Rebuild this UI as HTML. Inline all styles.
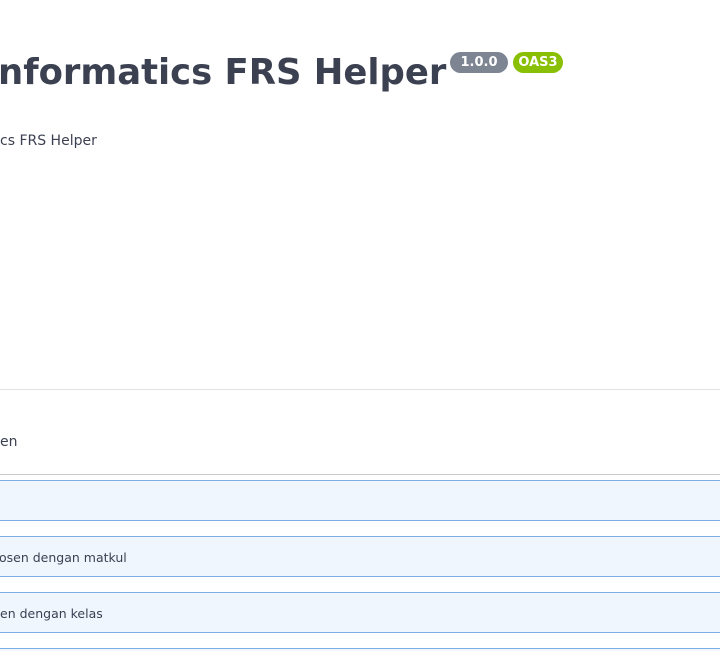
<!DOCTYPE html>
<html><head><meta charset="utf-8"><style>
html,body{margin:0;padding:0;width:720px;height:651px;overflow:hidden;background:#fff;font-family:"DejaVu Sans","Liberation Sans",sans-serif;color:#3b4151;position:relative}
.a{position:absolute;white-space:nowrap}
.t{left:-2px;top:51px;font-size:35.4px;font-weight:bold;line-height:44px}
.b{top:52px;height:21px;border-radius:11px;color:#fff;font-size:13px;font-weight:bold;line-height:22px;text-align:center}
.op{position:absolute;left:-10px;width:740px;height:39px;background:#eff6fe;border-top:1px solid #7eaee2;border-bottom:1px solid #7eaee2;box-sizing:content-box}
.op span{position:absolute;left:10px;top:13px;font-size:12.5px;line-height:16px}
</style></head><body>
<div class="a t">nformatics FRS Helper</div>
<div class="a b" style="left:450px;width:58px;background:#7d8492">1.0.0</div>
<div class="a b" style="left:513px;width:50px;background:#89bf04">OAS3</div>
<div class="a" style="left:0;top:132px;font-size:14px;line-height:18px">cs FRS Helper</div>
<div class="a" style="left:0;top:389px;width:720px;height:1px;background:#e2e2e4"></div>
<div class="a" style="left:0;top:433px;font-size:14px;line-height:18px">en</div>
<div class="a" style="left:0;top:474px;width:720px;height:1px;background:#c8c8cc"></div>
<div class="op" style="top:480px"></div>
<div class="op" style="top:536px"><span style="left:9px">osen dengan matkul</span></div>
<div class="op" style="top:592px"><span>en dengan kelas</span></div>
<div class="op" style="top:648px;height:2px;border-bottom:none"></div>
</body></html>
